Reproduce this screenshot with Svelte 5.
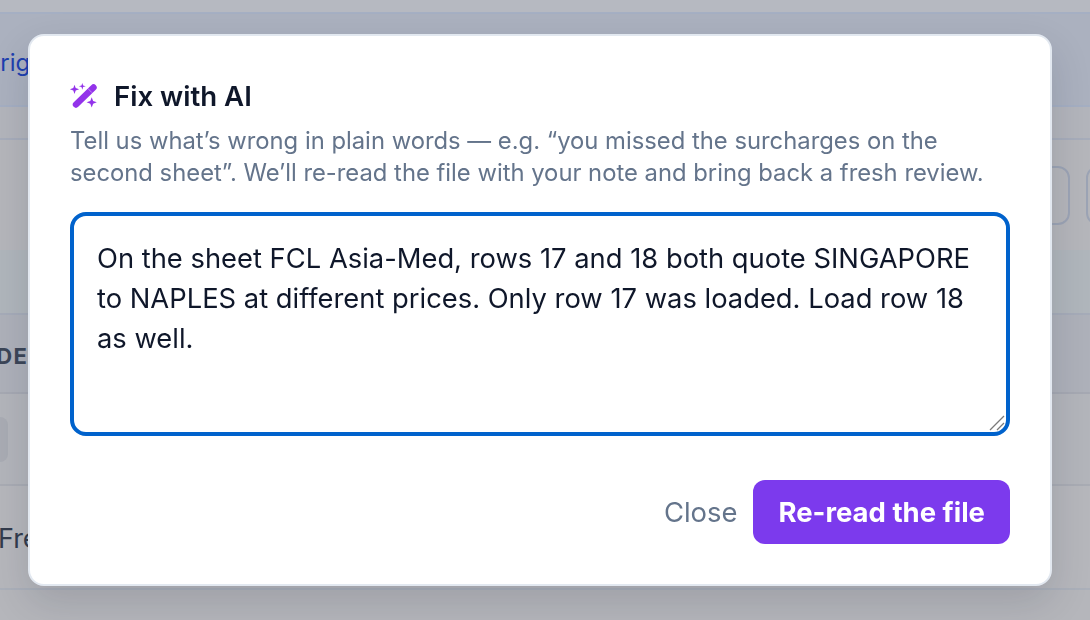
<script>
	let note = 'On the sheet FCL Asia-Med, rows 17 and 18 both quote SINGAPORE to NAPLES at different prices. Only row 17 was loaded. Load row 18 as well.';
</script>

<div class="page">
	<div class="bar-top"></div>
	<div class="bar-link"><span class="link">Original</span></div>
	<div class="bar-plain"></div>
	<div class="toolbar">
		<div class="tool-buttons">
			<span class="tool-btn"></span>
			<span class="tool-btn"></span>
		</div>
	</div>
	<div class="banner"></div>
	<div class="table-head"><span class="head-label">CODE</span></div>
	<div class="filter-row"><span class="chip"></span></div>
	<div class="table-row"><span class="cell">Freight</span></div>
	<div class="bar-end"></div>
</div>

<div class="overlay">
	<div class="modal">
		<div class="title-row">
			<svg class="wand" viewBox="0 0 28 28" fill="#9333ea" aria-hidden="true">
				<path d="M23.500 5.500L6 22.500" stroke="#9333ea" stroke-width="6.400" stroke-linecap="round" />
				<path d="M17.800 6.400l4.200 4.300" stroke="#fff" stroke-width=".7" opacity=".6" />
				<path d="M4.500 2.700l1.200 3.400 3.400 1.200-3.400 1.200-1.200 3.400-1.200-3.400L-.1 7.300l3.400-1.200z" />
				<path d="M12.300 .9l.8 2.600 2.600.8-2.600.8-.8 2.600-.8-2.600-2.600-.8 2.600-.8z" />
				<path d="M21.700 15.200l1.400 3.700 3.700 1.400-3.700 1.400-1.400 3.700-1.400-3.700-3.700-1.400 3.700-1.400z" />
			</svg>
			<h2>Fix with AI</h2>
		</div>
		<p class="desc">Tell us what’s wrong in plain words — e.g. “you missed the surcharges on the second sheet”. We’ll re-read the file with your note and bring back a fresh review.</p>
		<div class="note-wrap">
			<textarea class="note" bind:value={note}></textarea>
			<svg class="grip" viewBox="0 0 16 16" aria-hidden="true">
				<path d="M1 15L15 1M8 15l7-7" />
			</svg>
		</div>
		<div class="actions">
			<button class="close">Close</button>
			<button class="submit">Re-read the file</button>
		</div>
	</div>
</div>

<style>
	:global(body) {
		margin: 0;
		font-family: Inter, "Liberation Sans", sans-serif;
		overflow: hidden;
	}

	.page {
		height: 620px;
		display: flex;
		flex-direction: column;
		background: #b5b7bd;
		overflow: hidden;
	}

	.bar-top {
		height: 14px;
		background: #b6b9c1;
		border-bottom: 2px solid #a5afc3;
		box-sizing: border-box;
	}

	.bar-link {
		height: 93px;
		background: #abb1bf;
		border-bottom: 2px solid #a5afc3;
		box-sizing: border-box;
		display: flex;
		align-items: center;
		font-size: 24px;
		padding-top: 6px;
	}

	.link {
		color: #1e40af;
		margin-left: -18px;
	}

	.bar-plain {
		height: 33px;
		background: #b3b5bc;
		border-bottom: 2px solid #a7adbb;
		box-sizing: border-box;
	}

	.toolbar {
		height: 110px;
		background: #b5b6bb;
		display: flex;
		justify-content: flex-end;
		align-items: center;
	}

	.tool-buttons {
		display: flex;
		gap: 16px;
		margin-right: -54px;
	}

	.tool-btn {
		width: 58px;
		height: 59px;
		border: 2px solid #9ca4b5;
		border-radius: 12px;
		box-sizing: border-box;
	}

	.banner {
		height: 65px;
		background: #b0b6bc;
		border-bottom: 2px solid #a6acb9;
		box-sizing: border-box;
	}

	.table-head {
		height: 79px;
		background: #aeb1ba;
		border-bottom: 2px solid #a6a9b3;
		box-sizing: border-box;
		display: flex;
		align-items: center;
		overflow: hidden;
		padding-top: 4px;
	}

	.head-label {
		margin-left: -40px;
		font-size: 22px;
		font-weight: 700;
		letter-spacing: 1.5px;
		color: #3c4658;
	}

	.filter-row {
		height: 92px;
		background: #b3b5bb;
		border-bottom: 2px solid #a9acb4;
		box-sizing: border-box;
		display: flex;
		align-items: center;
	}

	.chip {
		width: 8px;
		height: 45px;
		background: #a9acb4;
		border-radius: 0 8px 8px 0;
	}

	.table-row {
		height: 104px;
		background: #b6b7bc;
		border-bottom: 2px solid #abb0ba;
		box-sizing: border-box;
		display: flex;
		align-items: center;
		overflow: hidden;
		padding-top: 2px;
	}

	.cell {
		font-size: 27px;
		margin-left: -2px;
		color: #333c4d;
		white-space: nowrap;
	}

	.bar-end {
		flex: 1;
		background: #b5b6bb;
	}

	.overlay {
		position: fixed;
		inset: 0;
		display: flex;
		align-items: center;
		justify-content: center;
		padding-right: 10px;
	}

	.modal {
		width: 1024px;
		height: 552px;
		box-sizing: border-box;
		background: #fff;
		border: 2px solid #e2e8f0;
		border-radius: 16px;
		padding: 40px;
		box-shadow: 0 16px 40px rgba(15, 23, 42, 0.14);
		display: flex;
		flex-direction: column;
	}

	.title-row {
		display: flex;
		align-items: center;
		gap: 16px;
		margin-bottom: 9px;
	}

	.wand {
		width: 28px;
		height: 28px;
		flex-shrink: 0;
		overflow: visible;
	}

	h2 {
		margin: 0;
		font-size: 27.6px;
		line-height: 40px;
		font-weight: 600;
		color: #0f172a;
	}

	.desc {
		margin: 0 0 23px;
		font-size: 23.8px;
		line-height: 32px;
		color: #64748b;
	}

	.note-wrap {
		position: relative;
	}

	.note {
		display: block;
		width: 100%;
		height: 224px;
		box-sizing: border-box;
		border: 4px solid #0062cc;
		border-radius: 16px;
		padding: 23px 23px;
		margin: 0;
		font-family: inherit;
		font-size: 27.35px;
		line-height: 40px;
		color: #0f172a;
		outline: none;
		resize: none;
	}

	.grip {
		position: absolute;
		right: 5px;
		bottom: 5px;
		width: 16px;
		height: 16px;
		pointer-events: none;
		fill: none;
		stroke: #7a7a7a;
		stroke-width: 1.3;
	}

	.actions {
		display: flex;
		justify-content: flex-end;
		align-items: center;
		gap: 16px;
		margin-top: 44px;
	}

	button {
		font-family: inherit;
		border: none;
		cursor: pointer;
		height: 64px;
		border-radius: 12px;
	}

	.close {
		background: none;
		color: #64748b;
		font-size: 27.4px;
		padding: 0;
	}

	.submit {
		background: #7c3aed;
		color: #fff;
		font-size: 27.5px;
		font-weight: 700;
		padding: 0 25px;
	}
</style>
